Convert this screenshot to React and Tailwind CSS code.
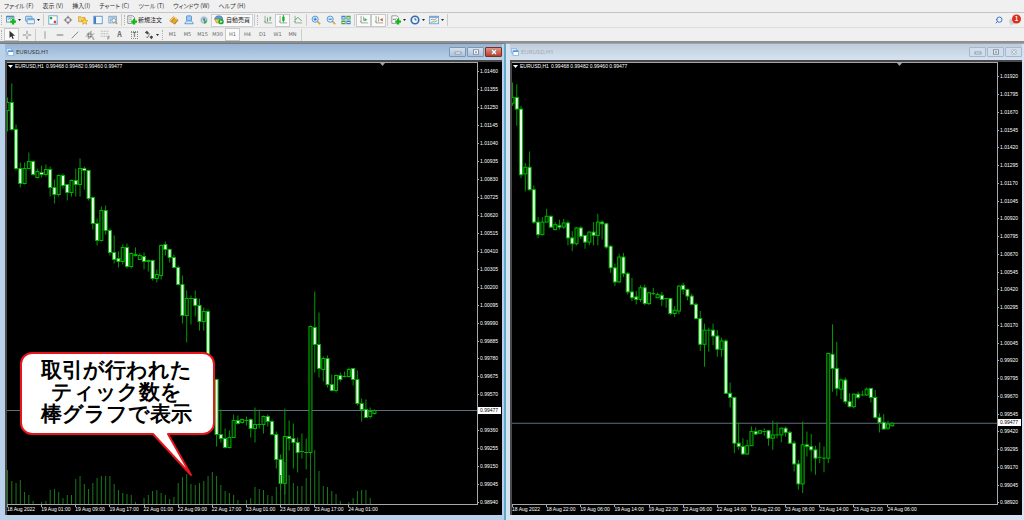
import { Search } from "lucide-react";

const BAR_STEP = 4.267;
const BARS_PER_LABEL = 8;

// [direction, body top, body bottom, high, low], levels grow as the price falls
const BARS = [
  ["u", 18, 25, 0, 28], ["d", 18, 32, 2, 52], ["d", 32, 111, 28, 115],
  ["u", 102, 110, 97, 131], ["d", 102, 129, 83, 130], ["d", 129, 168, 124, 170],
  ["d", 168, 183, 162, 187], ["u", 168, 183, 162, 184], ["u", 161, 168, 152, 168],
  ["d", 161, 174, 160, 175], ["u", 171, 177, 168, 178], ["d", 172, 174, 165, 177],
  ["u", 169, 174, 164, 176], ["d", 169, 187, 166, 196], ["d", 187, 194, 179, 203],
  ["u", 175, 194, 174, 196], ["d", 175, 185, 173, 188], ["d", 184, 192, 184, 200],
  ["u", 180, 192, 179, 196], ["d", 180, 184, 168, 196], ["u", 168, 184, 158, 196],
  ["d", 168, 170, 166, 189], ["d", 170, 198, 169, 200], ["d", 197, 223, 196, 229],
  ["d", 223, 240, 218, 245], ["u", 210, 240, 206, 241], ["d", 210, 230, 205, 234],
  ["d", 230, 252, 228, 255], ["d", 252, 259, 235, 263], ["d", 258, 261, 251, 267],
  ["u", 247, 261, 244, 264], ["d", 247, 266, 243, 268], ["u", 253, 266, 252, 268],
  ["d", 254, 255, 247, 256], ["u", 255, 259, 253, 259], ["d", 256, 261, 252, 269],
  ["d", 260, 261, 259, 271], ["d", 260, 278, 259, 280], ["u", 274, 278, 269, 282],
  ["u", 245, 275, 244, 279], ["d", 244, 249, 241, 255], ["d", 249, 257, 248, 262],
  ["d", 257, 267, 254, 268], ["d", 267, 284, 265, 285], ["d", 284, 315, 275, 323],
  ["u", 298, 315, 290, 342], ["u", 298, 298, 295, 324], ["d", 298, 305, 290, 316],
  ["d", 305, 321, 298, 330], ["u", 311, 321, 307, 330], ["d", 311, 374, 309, 375],
  ["d", 374, 379, 361, 391], ["d", 379, 434, 378, 446], ["d", 434, 438, 409, 442],
  ["d", 438, 447, 428, 448], ["u", 437, 447, 430, 448], ["u", 420, 437, 414, 437],
  ["d", 420, 423, 415, 424], ["u", 419, 422, 418, 423], ["u", 420, 420, 416, 425],
  ["d", 419, 428, 418, 437], ["u", 424, 428, 407, 442], ["u", 424, 424, 409, 428],
  ["u", 416, 424, 415, 433], ["d", 416, 421, 414, 426], ["d", 421, 434, 419, 435],
  ["d", 434, 459, 431, 468], ["d", 459, 483, 454, 490], ["u", 436, 483, 408, 494],
  ["d", 436, 438, 420, 450], ["d", 438, 442, 423, 468], ["d", 442, 452, 437, 472],
  ["u", 451, 451, 433, 458], ["u", 452, 452, 438, 469], ["u", 326, 452, 325, 458],
  ["d", 327, 344, 291, 372], ["d", 344, 368, 312, 377], ["u", 358, 369, 356, 381],
  ["d", 358, 384, 355, 387], ["d", 384, 390, 374, 391], ["u", 375, 390, 374, 392],
  ["d", 375, 379, 372, 381], ["u", 376, 376, 371, 377], ["u", 369, 376, 367, 377],
  ["d", 368, 379, 368, 385], ["d", 379, 403, 370, 405], ["d", 403, 409, 398, 421],
  ["d", 409, 417, 399, 417], ["u", 411, 416, 407, 418], ["u", 410, 413, 409, 414],
];

const VOLUMES = [
  35, 24, 22, 25, 13, 10, 4, 1, 3, 4, 15, 16, 13, 7, 10, 10, 26, 29, 21, 16, 22,
  27, 29, 29, 29, 21, 15, 12, 11, 10, 3, 0, 7, 10, 14, 15, 12, 10, 6, 8, 22, 28,
  31, 21, 20, 22, 24, 29, 33, 29, 20, 14, 12, 10, 5, 0, 5, 7, 18, 16, 15, 10, 9,
  18, 30, 43, 30, 22, 19, 19, 27, 52, 55, 34, 19, 18, 14, 11, 4, 0, 3, 7, 14, 15,
  15, 7, 1,
];

const CHARTS = [
  {
    id: "left",
    active: true,
    bars: BARS.slice(3),
    volumes: VOLUMES,
    offset: -62.5,
    factor: 1,
    topPrice: 101460,
    priceStep: 105,
    labelHeight: 17.94,
    labelStart: 1,
    times: ["18 Aug 2022", "19 Aug 01:00", "19 Aug 09:00", "19 Aug 17:00", "22 Aug 01:00", "22 Aug 09:00", "22 Aug 17:00", "23 Aug 01:00", "23 Aug 09:00", "23 Aug 17:00", "24 Aug 01:00"],
  },
  {
    id: "right",
    active: false,
    bars: BARS,
    volumes: [],
    offset: 19.5,
    factor: 0.8311,
    topPrice: 101920,
    priceStep: 125,
    labelHeight: 17.75,
    labelStart: 6,
    times: ["18 Aug 2022", "18 Aug 22:00", "19 Aug 06:00", "19 Aug 14:00", "19 Aug 22:00", "22 Aug 06:00", "22 Aug 14:00", "22 Aug 22:00", "23 Aug 06:00", "23 Aug 14:00", "23 Aug 22:00", "24 Aug 06:00"],
  },
];

const MENUS = ["ファイル (F)", "表示 (V)", "挿入(I)", "チャート (C)", "ツール (T)", "ウィンドウ (W)", "ヘルプ (H)"];
const PERIODS = ["M1", "M5", "M15", "M30", "H1", "H4", "D1", "W1", "MN"];

const AXES = <path d="M2.5 1v8.5H11M1 8h2" stroke="#8a9a8a" fill="none" />;

const ICONS = {
  newChart: (
    <>
      <rect x="0.5" y="1.5" width="9" height="7" fill="#eaf6ff" stroke="#4f8cb8" />
      <path d="M1 2h8" stroke="#4f8cb8" strokeWidth="2" />
      <path d="M2 6l2-2 2 1 2-2" stroke="#2f9a3a" fill="none" />
      <path d="M8.5 4.500v7M5 8h7" stroke="#12b81c" strokeWidth="2.800" />
    </>
  ),
  profiles: (
    <>
      <rect x="0.5" y="1.5" width="8" height="6" rx="1" fill="#b9dbf5" stroke="#5c93c4" />
      <rect x="2.5" y="4.5" width="9" height="6" rx="1" fill="#e6f3fd" stroke="#5c93c4" />
      <path d="M3 5.5h8" stroke="#78aedb" strokeWidth="1.6" />
    </>
  ),
  market: (
    <>
      <rect x="1" y="1" width="10" height="10" fill="#fff" stroke="#5d9cd0" />
      <path d="M3 5V3h2M3 3l2 2" stroke="#1cae2c" strokeWidth="1.5" fill="none" />
      <path d="M7 9h2V7M7 7l2 2" stroke="#d8472c" strokeWidth="1.5" fill="none" />
    </>
  ),
  target: (
    <>
      <circle cx="6" cy="6" r="3.2" fill="none" stroke="#777" />
      <path d="M6 1v3.5M6 7.500V11M1 6h3.500M7.500 6H11" stroke="#777" strokeWidth="1.3" />
    </>
  ),
  navigator: (
    <>
      <path d="M0.500 2h3l1 1h4v5h-8z" fill="#f5cf63" stroke="#c79a2c" strokeWidth="0.8" />
      <path d="M8 4l1.200 2.400 2.600.3-1.900 1.800.5 2.600L8 9.800l-2.400 1.300.5-2.600-1.900-1.800 2.600-.3z" fill="#ffd93b" stroke="#c98b1b" strokeWidth="0.7" />
    </>
  ),
  terminal: (
    <>
      <rect x="1" y="1.500" width="10" height="9" fill="#fff" stroke="#4a86c5" />
      <path d="M2.500 2v8.500" stroke="#3b7cc4" strokeWidth="2.400" />
      <path d="M5 4h5M5 6h5M5 8h5" stroke="#dbe7f3" strokeWidth="0.800" />
    </>
  ),
  tester: (
    <>
      <rect x="1" y="1.500" width="9" height="8" fill="#e3f0fa" stroke="#6f9cc4" />
      <path d="M2 3.500h7M3 5v3M5 4v3" stroke="#6f9cc4" />
      <circle cx="7" cy="6.500" r="2.300" fill="#f5fbff" stroke="#7f8f9f" />
      <path d="M8.800 8.300l2.200 2.500" stroke="#d59a2d" strokeWidth="1.600" />
    </>
  ),
  order: (
    <>
      <path d="M1 1h6l2 2v7H1z" fill="#fff" stroke="#777" />
      <path d="M2.500 3.500h4M2.500 5.500h3M2.500 7.500h2" stroke="#888" strokeWidth="0.800" />
      <path d="M8.500 4.500v7M5 8h7" stroke="#12b81c" strokeWidth="2.800" />
    </>
  ),
  gold: (
    <>
      <path d="M1 7l4-5 6 4-4 5z" fill="#e8a62a" stroke="#b27614" strokeWidth="0.800" />
      <path d="M1.500 7l3.700-4.500 5 3.300" stroke="#ffe18a" fill="none" />
      <path d="M3 8l4-4.500M7 10l3.500-4" stroke="#b27614" strokeWidth="0.700" />
    </>
  ),
  community: (
    <>
      <rect x="3" y="1" width="6" height="6" rx="1" fill="#9ccaf2" stroke="#4a8fd0" />
      <path d="M1 10.500c.5-3 2.500-3.500 5-3.500s4.500.5 5 3.500z" fill="#d8eafa" stroke="#4a8fd0" />
    </>
  ),
  signals: (
    <>
      <circle cx="6" cy="6" r="5" fill="#d5dde4" />
      <circle cx="6" cy="6" r="3.300" fill="none" stroke="#8fa9bb" />
      <circle cx="6" cy="5.500" r="1.500" fill="#3f83c5" />
      <path d="M6 6.500h3.500a4 4 0 0 1-3.500 4z" fill="#37b04a" />
    </>
  ),
  auto: (
    <>
      <path d="M1 5c0-3 2-4 5-4s4.500 1.500 4.500 4z" fill="#5b9fd6" stroke="#2f72aa" strokeWidth="0.700" />
      <path d="M0.500 5h9.500L8 9.500H3z" fill="#f1c94b" stroke="#a98422" strokeWidth="0.700" />
      <circle cx="8.500" cy="8" r="3.200" fill="#16a82a" />
      <path d="M7.600 6.300l2.600 1.700-2.600 1.700z" fill="#fff" />
    </>
  ),
  bars: (
    <>
      {AXES}
      <path d="M5.500 3v5M4.500 7h1M8.500 2v5M8.500 3.500h1.500" stroke="#3f9a48" />
    </>
  ),
  candles: (
    <>
      {AXES}
      <path d="M6.500 0v9" stroke="#109a1e" />
      <rect x="5" y="2" width="3" height="5" fill="#18b92a" />
    </>
  ),
  line: (
    <>
      {AXES}
      <path d="M3 6c2-4 4-3 5-1l2.500 2" stroke="#3f9a48" fill="none" />
    </>
  ),
  zoomIn: (
    <>
      <path d="M7.500 7.500l3.500 3.500" stroke="#d9a62b" strokeWidth="2" />
      <circle cx="5" cy="5" r="3.700" fill="#dff0ff" stroke="#3f86cf" />
      <path d="M5 3v4M3 5h4" stroke="#2f78c8" strokeWidth="1.300" />
    </>
  ),
  zoomOut: (
    <>
      <path d="M7.500 7.500l3.500 3.500" stroke="#d9a62b" strokeWidth="2" />
      <circle cx="5" cy="5" r="3.700" fill="#dff0ff" stroke="#3f86cf" />
      <path d="M3 5h4" stroke="#2f78c8" strokeWidth="1.300" />
    </>
  ),
  tiles: (
    <>
      <path d="M0.500 1h5v4.500h-5zM6.500 6.500h5V11h-5z" fill="#3f7fd0" />
      <path d="M6.500 1h5v4.500h-5zM0.500 6.500h5V11h-5z" fill="#43a83a" />
      <path d="M1.500 3.500h3M7.500 3.500h3M1.500 9h3M7.500 9h3" stroke="#e6f5ff" strokeWidth="1.400" />
    </>
  ),
  scroll: (
    <>
      {AXES}
      <path d="M5.500 2v5" stroke="#8a9a8a" />
      <path d="M6.500 3.500l3.500 2.200-3.500 2.200z" fill="#2ab53a" />
    </>
  ),
  shift: (
    <>
      {AXES}
      <path d="M5.500 2v6" stroke="#8a9a8a" />
      <path d="M10.500 3.500L7 5.700l3.500 2.200z" fill="#d3562f" />
    </>
  ),
  indicators: (
    <>
      <path d="M1 1h6l2 2v7H1z" fill="#fff" stroke="#888" />
      <path d="M2.500 6c1-3 2 1 4-2" stroke="#555" fill="none" />
      <path d="M8.500 4.500v7M5 8h7" stroke="#12b81c" strokeWidth="2.800" />
    </>
  ),
  clock: (
    <>
      <circle cx="6" cy="6" r="4.500" fill="#f4faff" stroke="#2b6fb8" strokeWidth="2" />
      <path d="M6 3.500V6h2" stroke="#445" fill="none" />
    </>
  ),
  template: (
    <>
      <rect x="0.500" y="1.500" width="11" height="9" fill="#eef7fd" stroke="#6aa0cc" />
      <path d="M1 2.500h10" stroke="#5b9bd5" strokeWidth="1.600" />
      <path d="M2 6l2-1 2 1 3-2" stroke="#c0532d" fill="none" strokeWidth="0.800" />
      <path d="M2 9l3-1 2 .5 3-2" stroke="#2f9a3a" fill="none" strokeWidth="0.800" />
    </>
  ),
  cursor: <path d="M3 1v8.500l2.200-2 1.500 3.300 1.500-.7-1.500-3.200h3z" fill="#333" />,
  cross: <path d="M6 1v4M6 7v4M1 6h4M7 6h4" stroke="#888" strokeWidth="1.200" />,
  vline: <path d="M6 1.500v9" stroke="#888" />,
  hline: <path d="M2 6h8" stroke="#777" strokeWidth="1.200" />,
  trend: <path d="M2 10l8-8" stroke="#888" strokeWidth="1.200" />,
  channel: (
    <path d="M1 8l7-7M4 11l7-7M2 5h7M3 8h6M4 3v7M7 2v7M9.500 8v3h2" stroke="#777" strokeWidth="0.900" fill="none" />
  ),
  fibo: (
    <>
      <path d="M1 1.500h10M1 4.500h10M1 7.500h7" stroke="#999" strokeDasharray="1 1" />
      <path d="M9.500 11.500V7.500h2M9.500 9.500h2" stroke="#777" fill="none" strokeWidth="0.900" />
    </>
  ),
  arrows: (
    <>
      <path d="M1 3l2.500-2L6 3.500 4.500 5.500zM6.500 8.500L9 6.500l2 2-2 2.500z" fill="#444" />
      <path d="M2.500 8l1.500 1.500L7 4" stroke="#666" fill="none" />
    </>
  ),
};

const Icon = ({ name }) => (
  <svg viewBox="0 0 12 12" className="h-[10px] w-[10px] shrink-0" fill="none" aria-hidden="true">
    {ICONS[name]}
  </svg>
);

const ToolButton = ({ name, menu, pressed, children }) => (
  <button
    type="button"
    aria-label={name}
    aria-pressed={pressed}
    className={`flex h-[13px] shrink-0 items-center justify-center ${menu ? "w-[19px] gap-[2px]" : "w-[15px]"} ${
      pressed ? "border border-[#c9c9c9] bg-[#fafafa]" : ""
    }`}
  >
    {children || <Icon name={name} />}
    {menu && (
      <svg viewBox="0 0 3 2" className="h-[2px] w-[3px]" aria-hidden="true">
        <path d="M0 0h3L1.500 2z" fill="#222" />
      </svg>
    )}
  </button>
);

const Grip = () => <span className="mx-px h-[10px] w-[2px] shrink-0 border-l border-dotted border-[#b0b0b0]" />;
const Divider = () => <span className="mx-px h-[12px] w-px shrink-0 bg-[#cccccc]" />;

const Toolbars = () => (
  <header className="shrink-0 border-b-2 border-[#8f8f8f] bg-[#f0f0f0]">
    <nav className="flex h-[13px] items-center gap-[9px] border-b border-[#c4c4c4] pl-1 text-[6px] leading-none text-[#333] [font-feature-settings:'palt']">
      {MENUS.map((menu) => (
        <button type="button" key={menu} className="whitespace-nowrap">
          {menu}
        </button>
      ))}
    </nav>

    <div className="flex h-[14px] items-center">
      <Grip />
      <ToolButton name="newChart" menu />
      <ToolButton name="profiles" menu />
      <Divider />
      <ToolButton name="market" />
      <ToolButton name="target" />
      <ToolButton name="navigator" />
      <ToolButton name="terminal" />
      <ToolButton name="tester" />
      <Divider />
      <Grip />
      <button type="button" className="flex w-[39px] shrink-0 items-center gap-px whitespace-nowrap text-[6px] leading-none text-[#222]">
        <Icon name="order" />
        新規注文
      </button>
      <ToolButton name="gold" />
      <ToolButton name="community" />
      <ToolButton name="signals" />
      <button
        type="button"
        className="flex h-[13px] w-[42px] shrink-0 items-center justify-center gap-[2px] whitespace-nowrap border border-[#d0d0d0] bg-[#fafafa] text-[6px] leading-none text-[#222]"
      >
        <Icon name="auto" />
        自動売買
      </button>
      <Divider />
      <Grip />
      <ToolButton name="bars" />
      <ToolButton name="candles" pressed />
      <ToolButton name="line" />
      <Divider />
      <ToolButton name="zoomIn" />
      <ToolButton name="zoomOut" />
      <ToolButton name="tiles" />
      <Divider />
      <ToolButton name="scroll" pressed />
      <ToolButton name="shift" pressed />
      <Divider />
      <ToolButton name="indicators" menu />
      <ToolButton name="clock" menu />
      <ToolButton name="template" menu />
      <Divider />
      <div className="ml-auto flex items-center gap-[6px] pr-[3px]">
        <button type="button" aria-label="search">
          <Search className="h-[8px] w-[8px] -scale-x-100 text-[#3f72cf]" strokeWidth={3} />
        </button>
        <button type="button" aria-label="notifications" className="relative h-[12px] w-[12px]">
          <svg viewBox="0 0 12 12" className="h-[12px] w-[12px]" aria-hidden="true">
            <path d="M0 7c0-2 3-3 5-2s3 4 1 5l-3 .500-1.500 1.500v-2C.500 9 0 8 0 7z" fill="#d0d0d0" />
            <circle cx="7.500" cy="5" r="4.500" fill="#dc2f1c" />
          </svg>
          <span className="absolute left-[5px] top-[2px] w-[5px] text-center text-[6px] font-bold leading-[6px] text-white">1</span>
        </button>
      </div>
    </div>

    <div className="flex h-[14px] items-center border-t border-[#dddddd]">
      <Grip />
      <ToolButton name="cursor" pressed />
      <ToolButton name="cross" />
      <Divider />
      <ToolButton name="vline" />
      <ToolButton name="hline" />
      <ToolButton name="trend" />
      <ToolButton name="channel" />
      <ToolButton name="fibo" />
      <ToolButton name="text">
        <span className="text-[7px] font-bold leading-none text-[#666]">A</span>
      </ToolButton>
      <ToolButton name="label">
        <span className="border border-dotted border-[#888] px-px text-[6px] font-bold leading-[6px] text-[#666]">T</span>
      </ToolButton>
      <ToolButton name="arrows" menu />
      <Grip />
      {PERIODS.map((period) => (
        <ToolButton key={period} name={period} pressed={period === "H1"}>
          <span className="font-['DejaVu_Sans'] text-[5px] leading-none text-[#666]">{period}</span>
        </ToolButton>
      ))}
      <Divider />
    </div>
  </header>
);

const Candle = ({ bar, x, toY }) => {
  const [dir, top, bottom, high, low] = bar;
  const y = toY(top);
  const height = toY(bottom) - y;
  return (
    <g>
      <path d={`M${x} ${toY(high)}V${toY(low)}`} stroke="#009a00" strokeWidth="1" />
      {height < 1 ? (
        <path d={`M${x - 2} ${y}h4`} stroke="#00b400" strokeWidth="1" />
      ) : (
        <rect
          x={x - 1.5}
          y={y}
          width="3"
          height={height}
          fill={dir === "d" ? "#f0fff0" : "#001c00"}
          stroke="#00b400"
          strokeWidth="1"
        />
      )}
    </g>
  );
};

const WindowButtons = ({ active }) => {
  const base = "flex h-[10px] w-[17px] items-center justify-center rounded-[1px] border";
  const tone = active ? "border-[#7f97b0] bg-linear-to-b from-[#d3e0ee] to-[#abc3dc]" : "border-[#a5b8cc] bg-[#cfdded]";
  const close = active ? "border-[#7c2f25] bg-linear-to-b from-[#dd9385] to-[#bd3a22]" : tone;
  const stroke = active ? "#fff" : "#e9eef4";
  return (
    <div className="ml-auto flex gap-px">
      <button type="button" aria-label="minimize" className={`${base} ${tone}`}>
        <svg viewBox="0 0 8 6" className="h-[6px] w-[8px]">
          <rect x="1" y="3" width="6" height="2" fill={stroke} stroke="#75818e" strokeWidth="0.700" />
        </svg>
      </button>
      <button type="button" aria-label="maximize" className={`${base} ${tone}`}>
        <svg viewBox="0 0 8 6" className="h-[6px] w-[8px]">
          <rect x="1.500" y="0.800" width="5" height="4.400" fill={stroke} stroke="#75818e" strokeWidth="0.800" />
          <rect x="3" y="2.500" width="2" height="1.200" fill="#75818e" />
        </svg>
      </button>
      <button type="button" aria-label="close" className={`${base} ${close}`}>
        <svg viewBox="0 0 8 6" className="h-[6px] w-[8px]">
          <path d="M2 1l4 4M6 1L2 5" stroke="#6d7681" strokeWidth="2.200" />
          <path d="M2 1l4 4M6 1L2 5" stroke={stroke} strokeWidth="1.400" />
        </svg>
      </button>
    </div>
  );
};

const Callout = () => (
  <div className="absolute left-[13px] top-[290px] h-[126px] w-[197px]">
    <svg viewBox="0 0 197 126" className="absolute inset-0 h-full w-full" aria-hidden="true">
      <path
        d="M12 1H183a11 11 0 0 1 11 11V71a11 11 0 0 1-11 11H148L171 123L133 82H12A11 11 0 0 1 1 71V12A11 11 0 0 1 12 1z"
        fill="#fff"
        stroke="#e8141c"
        strokeWidth="2"
        strokeLinejoin="round"
      />
    </svg>
    <p className="relative whitespace-nowrap pr-1 pt-[7px] text-center text-[21px] font-black leading-[22px] text-black">
      取引が行われた
      <br />
      ティック数を
      <br />
      棒グラフで表示
    </p>
  </div>
);

const ChartWindow = ({ chart }) => {
  const { active, bars, volumes, offset, factor, times } = chart;
  const toY = (level) => level * factor + offset;
  const barX = (i) => 0.5 + i * BAR_STEP;
  const current = toY(410);
  const prices = Array.from({ length: 25 }, (_, i) => ((chart.topPrice - i * chart.priceStep) / 100000).toFixed(5));

  return (
    <section
      className={`flex min-w-0 flex-col border-t pb-[5px] ${
        active
          ? "border-r-2 border-t-[#6f7f90] border-r-[#5fabc6] bg-[#b9d1ea] pl-[5px] pr-[2px]"
          : "border-t-[#9aa5b0] bg-[#d7e3f1] pl-[4px] pr-[2px]"
      }`}
    >
      <div
        className={`flex h-[16px] shrink-0 items-center gap-[2px] ${
          active ? "bg-linear-to-b from-[#98b4d2] to-[#b9d1ea] text-[#333]" : "bg-linear-to-b from-[#bfcddb] to-[#d7e3f1] text-[#a3a9b0]"
        }`}
      >
        <svg viewBox="0 0 12 12" className="ml-px h-[8px] w-[8px]" fill="none" aria-hidden="true">
          <rect x="0.500" y="0.500" width="8" height="7" rx="1" fill="#d5e9fb" stroke="#6ea3da" />
          <rect x="3" y="4" width="8.500" height="7.500" rx="1" fill="#fff" stroke="#5593d6" />
          <path d="M3 5h8" stroke="#5593d6" strokeWidth="2" />
        </svg>
        <h2 className="font-['Noto_Sans'] text-[6px] leading-none">EURUSD,H1</h2>
        <WindowButtons active={active} />
      </div>

      <div className="flex min-h-0 flex-1 border-l-2 border-t-2 border-[#4a4a4a] bg-black font-['Liberation_Sans'] text-[5px] leading-none text-white">
        <div className="relative flex min-w-0 flex-1 flex-col">
          <svg className="min-h-0 w-full flex-1 border-r border-t border-[#a8a8a8]" role="img" aria-label="EURUSD,H1">
            <path d={`M0 ${current}H2000`} stroke="#5d6f7d" strokeWidth="1" />
            {bars.map((bar, i) => (
              <Candle key={i} bar={bar} x={barX(i)} toY={toY} />
            ))}
            {volumes.map((volume, i) => (
              <path key={i} d={`M${barX(i)} 442v${-volume}`} stroke="#1a7a1a" strokeWidth="1" />
            ))}
            <svg x="80%" y="0" width="5" height="3" overflow="visible">
              <path d="M-3 0h5L-.500 3z" fill="#8fa6b8" />
            </svg>
          </svg>
          <p className="absolute left-px top-[2px] flex items-center gap-[2px] whitespace-nowrap">
            <svg viewBox="0 0 5 3" className="h-[3px] w-[5px]" aria-hidden="true">
              <path d="M0 0h5L2.500 3z" fill="#fff" />
            </svg>
            <span>EURUSD,H1</span>
            <span>0.99468 0.99482 0.99460 0.99477</span>
          </p>
          <div className="flex h-[11px] shrink-0 overflow-hidden border-t border-[#a8a8a8]">
            {times.map((time) => (
              <span key={time} className="shrink-0 whitespace-nowrap" style={{ width: BAR_STEP * BARS_PER_LABEL }}>
                <span className="block h-[2px] w-px bg-[#a8a8a8]" />
                {time}
              </span>
            ))}
          </div>
          {active && <Callout />}
        </div>

        <div className="relative w-[24px] shrink-0 overflow-hidden">
          <ul style={{ marginTop: chart.labelStart }}>
            {prices.map((price) => (
              <li key={price} className="flex items-center gap-px" style={{ height: chart.labelHeight }}>
                <span className="h-px w-px bg-[#a8a8a8]" />
                {price}
              </li>
            ))}
          </ul>
          <output
            className="absolute left-0 w-[23px] bg-white py-px pl-[2px] text-black"
            style={{ top: Math.round(current) - 3 }}
          >
            0.99477
          </output>
        </div>
      </div>
    </section>
  );
};

export default function App() {
  return (
    <div className="flex h-screen min-h-[520px] flex-col overflow-hidden bg-[#f0f0f0] font-['Noto_Sans_CJK_JP',sans-serif]">
      <Toolbars />
      <main className="grid min-h-0 flex-1 grid-cols-[506fr_518fr]">
        {CHARTS.map((chart) => (
          <ChartWindow key={chart.id} chart={chart} />
        ))}
      </main>
    </div>
  );
}
